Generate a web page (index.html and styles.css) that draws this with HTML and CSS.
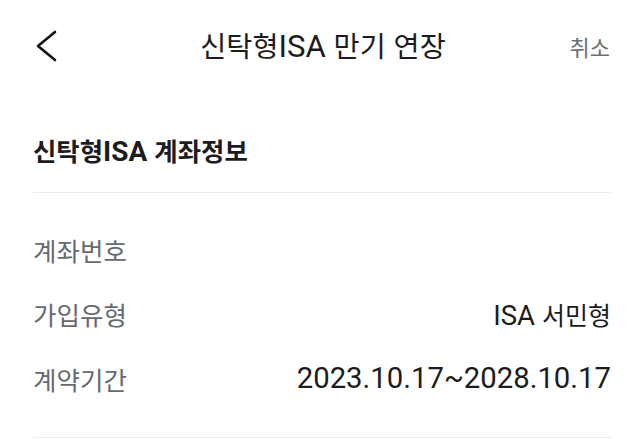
FILE: index.html
```html
<!DOCTYPE html>
<html lang="ko">
<head>
<meta charset="utf-8">
<title>신탁형ISA 만기 연장</title>
<link rel="stylesheet" href="styles.css">
</head>
<body>
<header class="header">
  <div class="back">
    <svg width="22" height="32" viewBox="0 0 22 32" aria-hidden="true">
      <polyline points="19,2 2,16 19,30" fill="none" stroke="#111" stroke-width="2.6" stroke-linecap="round" stroke-linejoin="round"/>
    </svg>
  </div>
  <h1 class="title">신탁형<span class="lat">ISA</span> 만기 연장</h1>
  <div class="cancel">취소</div>
</header>
<main class="content">
  <h2 class="section-title">신탁형<span class="lat">ISA</span> 계좌정보</h2>
  <div class="rows">
    <div class="row"><span class="label">계좌번호</span><span class="value"></span></div>
    <div class="row"><span class="label">가입유형</span><span class="value"><span class="lat">ISA</span> 서민형</span></div>
    <div class="row"><span class="label">계약기간</span><span class="value date">2023.10.17~2028.10.17</span></div>
  </div>
</main>
</body>
</html>
```

FILE: styles.css
```css
* { box-sizing: border-box; }
body {
  margin: 0;
  background: #fff;
  font-family: Roboto, "Noto Sans CJK KR", sans-serif;
  color: #1c1c1e;
}
.lat { font-family: Roboto, sans-serif; }
.header {
  height: 92px;
  display: grid;
  grid-template-columns: 1fr auto 1fr;
  align-items: center;
  padding: 0 34px 0 36px;
}
.back { display: flex; align-items: center; }
.back svg { display: block; }
.title {
  margin: 0;
  font-family: "Noto Sans CJK KR", sans-serif;
  font-size: 28.3px;
  font-weight: 400;
  color: #1c1c1e;
  line-height: 36px;
  white-space: nowrap;
}
.title .lat { font-size: 1.1em; }
.cancel {
  justify-self: end;
  font-family: "Noto Sans CJK KR", sans-serif;
  font-size: 22px;
  color: #6b6e75;
}
.content { padding: 0 33px; }
.section-title {
  margin: 40px 0 0;
  padding-bottom: 22px;
  border-bottom: 1.5px solid #ececec;
  font-family: "Noto Sans CJK KR", sans-serif;
  font-size: 25.4px;
  font-weight: 700;
  line-height: 36px;
  color: #1c1c1e;
}
.section-title .lat { font-size: 1.1em; font-weight: 700; }
.rows {
  padding: 24px 0 26px;
  border-bottom: 1.5px solid #ececec;
}
.row {
  height: 64.5px;
  display: flex;
  align-items: center;
  justify-content: space-between;
}
.label {
  font-family: "Noto Sans CJK KR", sans-serif;
  font-size: 25.5px;
  color: #676a70;
}
.value {
  font-family: "Noto Sans CJK KR", sans-serif;
  font-size: 25px;
  color: #1c1c1e;
}
.value .lat { font-size: 1.1em; }
.value.date {
  font-family: Roboto, sans-serif;
  font-size: 29.3px;
}
```
